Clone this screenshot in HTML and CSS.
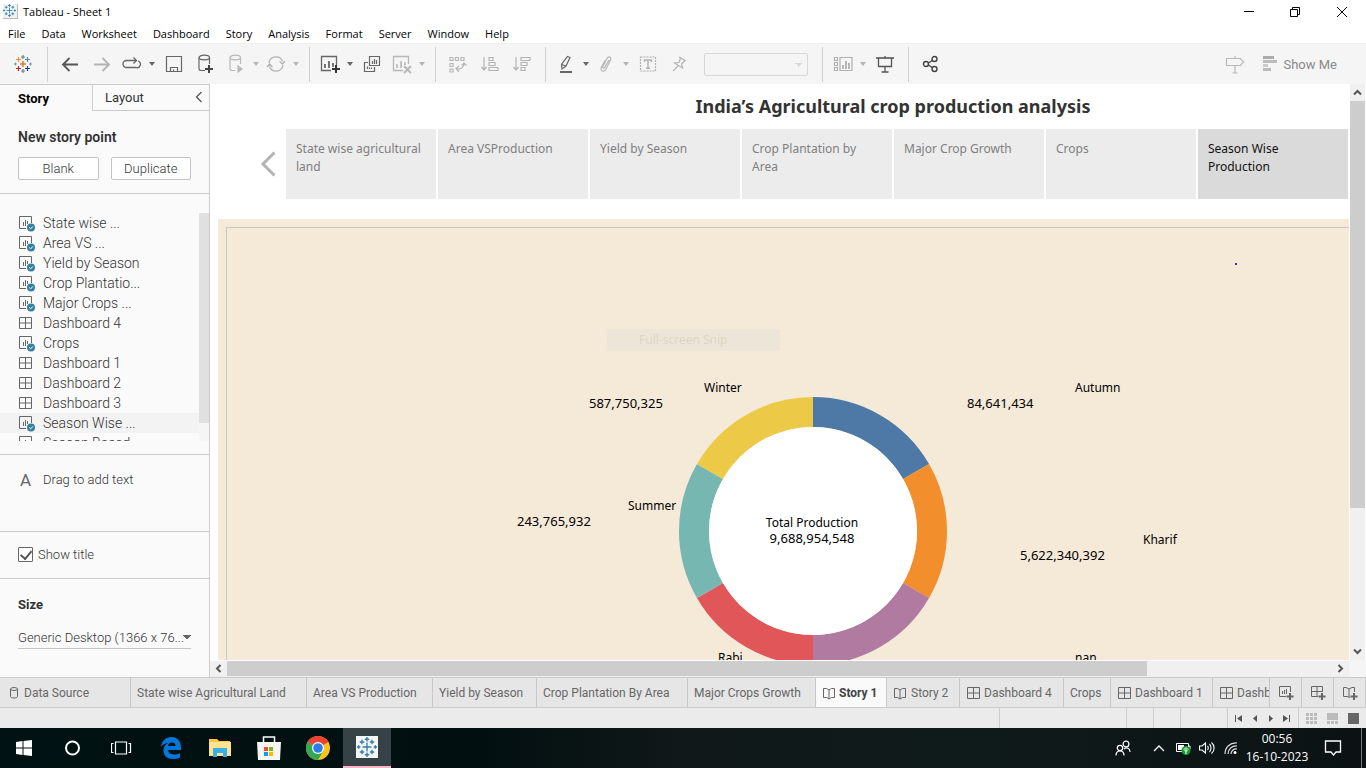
FILE: index.html
```html
<!DOCTYPE html>
<html lang="en">
<head>
<meta charset="utf-8">
<title>Tableau - Sheet 1</title>
<link rel="stylesheet" href="styles.css">
</head>
<body>
<svg class="defs" aria-hidden="true">
  <symbol id="tab-logo" viewBox="0 0 18 18">
    <g fill="none">
      <path stroke="#e8762d" stroke-width="1.5" d="M9 6v6M6 9h6"/>
      <path stroke="#5b879b" stroke-width="1.2" d="M9 0v4M7 2h4M9 14v4M7 16h4"/>
      <path stroke="#eb9129" stroke-width="1.2" d="M4.500 2v5M2 4.500h5"/>
      <path stroke="#59879b" stroke-width="1.2" d="M13.500 2v5M11 4.500h5"/>
      <path stroke="#c72035" stroke-width="1.2" d="M4.500 11v5M2 13.500h5"/>
      <path stroke="#1f447e" stroke-width="1.2" d="M13.500 11v5M11 13.500h5"/>
      <path stroke="#7099a6" d="M1.500 7.500v3M0 9h3M16.500 7.500v3M15 9h3"/>
    </g>
  </symbol>
  <symbol id="tab-blue" viewBox="0 0 18 18">
    <path fill="none" stroke="currentColor" stroke-width="1.200" d="M9 5v8M5 9h8M9 0v4M7 2h4M9 14v4M7 16h4M4.500 2.500v4M2.500 4.500h4M13.500 2.500v4M11.500 4.500h4M4.500 11.500v4M2.500 13.500h4M13.500 11.500v4M11.500 13.500h4M1.500 7.500v3M0 9h3M16.500 7.500v3M15 9h3"/>
  </symbol>
  <symbol id="sheet-ok" viewBox="0 0 18 17">
    <path fill="none" stroke="#666" d="M8 13.500H1.500V1.500h12V8"/>
    <path stroke="#666" d="M5.500 7v4M7.500 5v6M9.500 6v3"/>
    <circle cx="13" cy="12.500" r="4" fill="#36809f"/>
    <path fill="none" stroke="#fff" d="m11.200 12.500 1.400 1.400 2.300-2.500"/>
  </symbol>
  <symbol id="dash" viewBox="0 0 14 14">
    <path fill="none" stroke="#666" d="M1.500 1.500h12v11h-12zM7.500 1.500v11M1.500 7h12"/>
  </symbol>
  <symbol id="book" viewBox="0 0 14 14">
    <path fill="none" stroke="#666" d="M1.500 2.500h3L7 4l2.500-1.500h3v9h-3L7 13l-2.500-1.500h-3zM7 4v9"/>
  </symbol>
</svg>

<header>
  <div class="titlebar">
    <span class="app-icon"><svg width="13" height="13"><use href="#tab-blue"/></svg></span>
    <span class="app-title">Tableau - Sheet 1</span>
    <div class="win-controls">
      <button aria-label="Minimize"><svg width="12" height="12"><path stroke="#000" d="M1 5.500h10"/></svg></button>
      <button aria-label="Restore"><svg width="12" height="12"><path fill="none" stroke="#000" d="M1.500 3.500h7v7h-7zM3.500 3V1.500h7v7H9"/></svg></button>
      <button aria-label="Close"><svg width="12" height="12"><path stroke="#000" d="m1 1 10 10M11 1 1 11"/></svg></button>
    </div>
  </div>
  <nav class="menubar">
    <button>File</button><button>Data</button><button>Worksheet</button><button>Dashboard</button><button>Story</button><button>Analysis</button><button>Format</button><button>Server</button><button>Window</button><button>Help</button>
  </nav>
  <div class="toolbar">
    <div class="group">
      <button aria-label="Start page"><svg width="18" height="18"><use href="#tab-logo"/></svg></button>
    </div>
    <div class="group">
      <button aria-label="Undo"><svg width="18" height="18" fill="none" stroke="#555" stroke-width="1.800"><path d="M17 9.500H2M8.500 3 2 9.500 8.500 16"/></svg></button>
      <button aria-label="Redo" class="off"><svg width="18" height="18" fill="none" stroke="#b4b4b4" stroke-width="1.800"><path d="M1 9.500h15M9.500 3 16 9.500 9.500 16"/></svg></button>
      <button aria-label="Replay" class="split"><svg width="20" height="18" fill="none" stroke="#666" stroke-width="1.300"><path d="M6 12.500H4.500a3.500 3.500 0 0 1 0-7H14M11.500 2.500l3 3-3 3M14 12.500H6M16 6a3.300 3.300 0 0 1-2 6.500"/></svg></button>
      <button aria-label="Replay options" class="caret"></button>
      <button aria-label="Save"><svg width="18" height="18" fill="none" stroke="#666" stroke-width="1.200"><path d="M1.500 1.500h15v15h-15zM5.500 16.500v-4h7v4M8.500 16.500v-2"/></svg></button>
      <button aria-label="New data source"><svg width="20" height="20" fill="none" stroke="#666" stroke-width="1.200"><path d="M9 16.500H5c-1.500 0-2-1-2-2v-11M13.500 3.500V10"/><ellipse cx="8.300" cy="3.500" rx="5.200" ry="2.300"/><path stroke="#444" stroke-width="2" d="M13 11v8M9 15h8"/></svg></button>
      <button aria-label="Pause updates" class="split off"><svg width="20" height="20" fill="none" stroke="#b8b8b8" stroke-width="1.200"><path d="M9 16.500H6c-1.500 0-2-1-2-2v-11M14.500 3.500V10"/><ellipse cx="9.300" cy="3.500" rx="5.200" ry="2.300"/><path fill="#b8b8b8" d="m12 12 4 3-4 3z"/></svg></button>
      <button aria-label="Update options" class="caret off"></button>
      <button aria-label="Run update" class="split off"><svg width="20" height="18" fill="none" stroke="#b4b4b4" stroke-width="1.300"><path d="M3 8a7 7 0 0 1 13.500-1.500M17 10A7 7 0 0 1 3.500 11.500M13.500 6.500l3 2.500 2.500-3M1 12l2.500-3 3 3"/></svg></button>
      <button aria-label="Run options" class="caret off"></button>
    </div>
    <div class="group">
      <button aria-label="New worksheet" class="split"><svg width="20" height="20" fill="none" stroke="#666" stroke-width="1.300"><path d="M11 16.500H1.500v-14h15V12"/><path stroke-width="1.800" d="M5 10v4M9 7v7M13 9v4"/><path stroke="#333" stroke-width="2" d="M16 11v8M12 15h8"/></svg></button>
      <button aria-label="New sheet options" class="caret"></button>
      <button aria-label="Duplicate"><svg width="18" height="18" fill="none" stroke="#666" stroke-width="1.200"><path d="M6.500 1.500h10v9h-10zM5 7.500H1.500v9h10V12M9.500 6v3M11.500 4v5M13.500 5v4M4.500 11.500V14M6.500 12.500V14M8.500 12.500V14"/></svg></button>
      <button aria-label="Clear sheet" class="split off"><svg width="20" height="20" fill="none" stroke="#b8b8b8" stroke-width="1.300"><path d="M11 16.500H1.500v-14h15V10"/><path stroke-width="1.600" d="M5 10v4M9 7v7M13 8v3"/><path stroke-width="2" d="m12 12 7 7M19 12l-7 7"/></svg></button>
      <button aria-label="Clear options" class="caret off"></button>
    </div>
    <div class="group">
      <button aria-label="Swap rows and columns" class="off"><svg width="20" height="20" fill="none" stroke="#b8b8b8" stroke-width="1.200"><path d="M2 3.500h3v3H2zM7.500 3.500h3v3h-3zM13 3.500h3v3h-3zM2 9.500h3v3H2zM2 15h3v3H2zM8 14.500c5 1.500 8-1 8-5.500M11 12l-3 2.500 3 3.500M13.500 11.500 16 9l2.500 2.500"/></svg></button>
      <button aria-label="Sort ascending" class="off"><svg width="20" height="18" fill="none" stroke="#b4b4b4" stroke-width="1.200"><path d="M4 2v13M1.500 12 4 15l2.500-3M9 2.500h4v3H9zM9 7.500h6v3H9zM9 12.500h9v3H9z"/></svg></button>
      <button aria-label="Sort descending" class="off"><svg width="20" height="18" fill="none" stroke="#b4b4b4" stroke-width="1.200"><path d="M4 2v13M1.500 12 4 15l2.500-3M9 2.500h9v3H9zM9 7.500h6v3H9zM9 12.500h4v3H9z"/></svg></button>
    </div>
    <div class="group">
      <button aria-label="Highlight" class="split"><svg width="18" height="20" fill="none" stroke="#666" stroke-width="1.200"><path d="M10.500 2.500 13 3.500 9 12l-4 3-.500-4.500zM4.500 10.500 9 12"/><path stroke-width="2" d="M3 18h12"/></svg></button>
      <button aria-label="Highlight options" class="caret"></button>
      <button aria-label="Group members" class="split off"><svg width="18" height="20" fill="none" stroke="#b4b4b4" stroke-width="1.200"><path d="m12 6-4 7c-1 2-3 1-2-1l4-7.500c1.500-3 5-1.500 3.500 1.500L9 15c-2 4-6.500 2-4.500-2l4-7"/></svg></button>
      <button aria-label="Group options" class="caret off"></button>
      <button aria-label="Show mark labels" class="off"><svg width="18" height="18" fill="none" stroke="#b0b0b0" stroke-width="1.200"><path stroke-dasharray="2 1" d="M1.500 2h15v14h-15z"/><path stroke-width="1.400" d="M5.500 7V5h7v2M9 5v8M7 13.300h4"/></svg></button>
      <button aria-label="Fix axes" class="off"><svg width="18" height="18" fill="none" stroke="#b4b4b4" stroke-width="1.200"><path d="m8 2 7 4M9.500 3 8 7.500 3.500 8l8 5L10.500 9l3.500-3.500M7 11l-5 5"/></svg></button>
      <select class="fit" aria-label="Fit" disabled><option></option></select>
    </div>
    <div class="group">
      <button aria-label="Show cards" class="split off"><svg width="20" height="18" fill="none" stroke="#b0b0b0" stroke-width="1.200"><path d="M1.500 2.500h3v3h-3zM1.500 7.500h3v3h-3zM1.500 12.500h3v3h-3zM7 2.500h12v13H7z"/><path stroke-width="1.800" d="M10 10v4M13 6v8M16 8v6"/></svg></button>
      <button aria-label="Card options" class="caret off"></button>
      <button aria-label="Presentation mode"><svg width="18" height="18" fill="none" stroke="#555" stroke-width="1.300"><path stroke-width="1.600" d="M0 3h18"/><path d="M2.500 3v8.500h13V3M9 1v2M9 11.500V17M5.500 17h7"/></svg></button>
    </div>
    <div class="group last">
      <button aria-label="Share"><svg width="18" height="18" fill="none" stroke="#444" stroke-width="1.400"><circle cx="4" cy="9" r="2.500"/><circle cx="12.500" cy="4" r="2.500"/><circle cx="12.500" cy="14" r="2.500"/><path d="m6.300 8 4-2.500M6.300 10l4 2.500"/></svg></button>
    </div>
    <div class="show-me">
      <button aria-label="Guide"><svg width="20" height="20" fill="none" stroke="#b8b8b8" stroke-width="1.200"><path d="M1.500 4.500h14l3 3.500-3 3.500h-14zM10 2v2M10 11.500V19M7.500 19h5"/></svg></button>
      <button class="labelled"><svg width="14" height="16"><path fill="#aaa" d="M0 0h11v3H0z"/><path fill="#bbb" d="M0 4h14v3H0z"/><path fill="#ccc" d="M0 8h5v3H0z"/><path fill="#bbb" d="M0 12h8v3H0z"/></svg>Show Me</button>
    </div>
  </div>
</header>

<main>
  <aside>
    <div class="pane-tabs">
      <button class="pane-tab current">Story</button>
      <div class="pane-tab-rest"><button class="pane-tab">Layout</button><button class="collapse" aria-label="Collapse"><svg width="8" height="12" fill="none" stroke="#555" stroke-width="1.300"><path d="M6.500 0 1.500 5l5 5"/></svg></button></div>
    </div>
    <section class="new-point">
      <h2>New story point</h2>
      <div class="pair"><button>Blank</button><button>Duplicate</button></div>
    </section>
    <section class="sheets">
      <ul>
        <li><svg><use href="#sheet-ok"/></svg>State wise ...</li>
        <li><svg><use href="#sheet-ok"/></svg>Area VS ...</li>
        <li><svg><use href="#sheet-ok"/></svg>Yield by Season</li>
        <li><svg><use href="#sheet-ok"/></svg>Crop Plantatio...</li>
        <li><svg><use href="#sheet-ok"/></svg>Major Crops ...</li>
        <li class="board"><svg><use href="#dash"/></svg>Dashboard 4</li>
        <li><svg><use href="#sheet-ok"/></svg>Crops</li>
        <li class="board"><svg><use href="#dash"/></svg>Dashboard 1</li>
        <li class="board"><svg><use href="#dash"/></svg>Dashboard 2</li>
        <li class="board"><svg><use href="#dash"/></svg>Dashboard 3</li>
        <li class="hover"><svg><use href="#sheet-ok"/></svg>Season Wise ...</li>
        <li><svg><use href="#sheet-ok"/></svg>Season Based</li>
      </ul>
      <div class="list-track"><div class="list-thumb"></div></div>
    </section>
    <section class="drag"><span class="letter">A</span>Drag to add text</section>
    <section class="show-title"><label><input type="checkbox" checked>Show title</label></section>
    <section class="size">
      <label for="size">Size</label>
      <select id="size"><option>Generic Desktop (1366 x 76...</option></select>
    </section>
  </aside>

  <div class="workspace">
    <div class="viewport">
      <div class="story">
        <h1>India’s Agricultural crop production analysis</h1>
        <nav class="points">
          <button class="prev" aria-label="Previous"><svg width="16" height="26" fill="none" stroke="#b3b3b3" stroke-width="3"><path d="M14.500 1.500 3 13l11.500 11.500"/></svg></button>
          <button>State wise agricultural land</button><button>Area VSProduction</button><button>Yield by Season</button><button>Crop Plantation by Area</button><button>Major Crop Growth</button><button>Crops</button><button class="on">Season Wise Production</button>
        </nav>
        <div class="board-area">
          <div class="frame">
            <svg class="donut" width="270" height="270" viewBox="-135 -135 270 270">
              <g fill="none" stroke-width="30">
                <path stroke="#4e79a7" d="M0-119A119 119 0 0 1 103.060-59.500"/>
                <path stroke="#f28e2b" d="M103.060-59.500A119 119 0 0 1 103.060 59.500"/>
                <path stroke="#b07aa1" d="M103.060 59.500A119 119 0 0 1 0 119"/>
                <path stroke="#e15759" d="M0 119A119 119 0 0 1-103.060 59.500"/>
                <path stroke="#76b7b2" d="M-103.060 59.500A119 119 0 0 1-103.060-59.500"/>
                <path stroke="#edc948" d="M-103.060-59.500A119 119 0 0 1 0-119"/>
              </g>
              <circle r="104" fill="#fff"/>
            </svg>
            <div class="total">Total Production<b>9,688,954,548</b></div>
            <span class="name winter">Winter</span><b class="winter-n">587,750,325</b>
            <span class="name autumn">Autumn</span><b class="autumn-n">84,641,434</b>
            <span class="name summer">Summer</span><b class="summer-n">243,765,932</b>
            <span class="name kharif">Kharif</span><b class="kharif-n">5,622,340,392</b>
            <span class="name rabi">Rabi</span><span class="name nan">nan</span>
            <div class="snip">Full-screen Snip</div>
            <i class="dot"></i>
          </div>
        </div>
      </div>
    </div>
    <div class="vscroll">
      <button aria-label="Scroll up"><svg width="9" height="7" fill="none" stroke="#555" stroke-width="2"><path d="m1 5.500 3.500-3.500L8 5.500"/></svg></button>
      <div class="track"><div class="thumb"></div></div>
      <button aria-label="Scroll down"><svg width="9" height="7" fill="none" stroke="#555" stroke-width="2"><path d="m1 1.500 3.500 3.500L8 1.500"/></svg></button>
    </div>
    <div class="hscroll">
      <button aria-label="Scroll left"><svg width="7" height="9" fill="none" stroke="#555" stroke-width="2"><path d="M5.500 1 2 4.500 5.500 8"/></svg></button>
      <div class="track"><div class="thumb"></div></div>
      <button aria-label="Scroll right"><svg width="7" height="9" fill="none" stroke="#555" stroke-width="2"><path d="M1.500 1 5 4.500 1.500 8"/></svg></button>
    </div>
  </div>
</main>

<footer>
  <div class="tabs">
    <button class="source"><svg width="10" height="14" fill="none" stroke="#666"><ellipse cx="5" cy="3" rx="3.500" ry="1.500"/><path d="M1.500 3v7.500c0 2 7 2 7 0V3"/></svg>Data Source</button>
    <button>State wise Agricultural Land</button>
    <button>Area VS Production</button>
    <button>Yield by Season</button>
    <button>Crop Plantation By Area</button>
    <button>Major Crops Growth</button>
    <button class="active"><svg width="14" height="14"><use href="#book"/></svg>Story 1</button>
    <button><svg width="14" height="14"><use href="#book"/></svg>Story 2</button>
    <button><svg width="14" height="14"><use href="#dash"/></svg>Dashboard 4</button>
    <button>Crops</button>
    <button><svg width="14" height="14"><use href="#dash"/></svg>Dashboard 1</button>
    <button><svg width="14" height="14"><use href="#dash"/></svg>Dashb</button>
    <button class="new" aria-label="New worksheet"><svg width="16" height="16" fill="none" stroke="#666"><path d="M8 11.500H1.500v-10h11V7M4.500 6v3M6.500 5v4M8.500 4v5"/><path stroke-width="2" d="M12 8v7M8.500 11.500h7"/></svg></button>
    <button class="new" aria-label="New dashboard"><svg width="16" height="16" fill="none" stroke="#666"><path d="M8 11.500H1.500v-10h11V7M7 1.500v10M1.500 6.500h11"/><path stroke-width="2" d="M12 8v7M8.500 11.500h7"/></svg></button>
    <button class="new" aria-label="New story"><svg width="16" height="16" fill="none" stroke="#666"><path d="M8 12.500 5 11.500H1.500v-9H4L7 4l3-1.500h2.500V7M7 4v8"/><path stroke-width="2" d="M12 8v7M8.500 11.500h7"/></svg></button>
  </div>
  <div class="status">
    <span></span><span></span><span></span><span></span><span></span>
    <div class="pager">
      <button aria-label="First"><svg width="10" height="9" fill="#555"><path d="M1 1h1v7H1zM8 1v7L3 4.500z"/></svg></button>
      <button aria-label="Previous"><svg width="10" height="9" fill="#555"><path d="M7 1v7L3 4.500z"/></svg></button>
      <button aria-label="Next"><svg width="10" height="9" fill="#555"><path d="M3 1v7l4-3.500z"/></svg></button>
      <button aria-label="Last"><svg width="10" height="9" fill="#555"><path d="M7 1h1v7H7zM1 1v7l5-3.500z"/></svg></button>
    </div>
    <div class="views">
      <button aria-label="Sheet sorter"><svg width="11" height="11" fill="#bbb"><path d="M0 0h3v3H0zM4 0h3v3H4zM8 0h3v3H8zM0 4h3v3H0zM4 4h3v3H4zM8 4h3v3H8zM0 8h3v3H0zM4 8h3v3H4zM8 8h3v3H8z"/></svg></button>
      <button aria-label="Filmstrip"><svg width="11" height="11" fill="#bbb"><path d="M0 0h11v7H0zM0 8h3v3H0zM4 8h3v3H4zM8 8h3v3H8z"/></svg></button>
      <button aria-label="Tabs"><svg width="11" height="11" fill="#666"><path d="M0 0h11v11H0z"/></svg></button>
    </div>
  </div>
  <div class="taskbar">
    <div class="apps">
      <button aria-label="Start"><svg width="16" height="16" fill="#fff"><path d="m0 2 6.500-1v6.500H0zM7.500 1 16 0v7.500H7.500zM0 8.500h6.500V15L0 14zM7.500 8.500H16V16l-8.500-1z"/></svg></button>
      <button aria-label="Search"><svg width="16" height="16"><circle cx="7.500" cy="8" r="6.500" fill="none" stroke="#fff" stroke-width="2"/></svg></button>
      <button aria-label="Task view"><svg width="22" height="14" fill="none" stroke="#fff" stroke-width="1.200"><path d="M4.500 1h11v12h-11zM2.500 2.500h-2v9h2M17.500 2.500h2v9h-2"/></svg></button>
      <button aria-label="Edge"><svg width="22" height="22" fill="#0078d7"><path d="M1 10C1.500 4 6 0 11.500 0 17 0 21 4 21 10v3H8c.500 3 3 4.500 6.500 4.500 2 0 4-.500 5.500-1.500v4.500C18 21.500 15.500 22 13 22c-6 0-9.500-3.500-9.500-8.500 0-3.500 1.500-6 5-7.500C5.500 6 2.500 7.500 1 10zm7-1h7.500c0-2-1-3.500-3.500-3.500S8.500 7 8 9z"/></svg></button>
      <button aria-label="File Explorer"><svg width="22" height="20"><path fill="#ffc83d" d="M0 1h8l2 2h11v4H0z"/><path fill="#ffe290" d="M0 4h22v14H0z"/><path fill="#35b1e8" d="M4 10h14v9h-4v-4H8v4H4z"/></svg></button>
      <button aria-label="Store"><svg width="24" height="24"><path fill="none" stroke="#fff" stroke-width="1.500" d="M6.500 7V1h11v6"/><path fill="#f5f5f5" d="M0 6h24l-1 18H1z"/><path fill="#f25022" d="M7 11h4v4H7z"/><path fill="#7fba00" d="M12 11h4v4h-4z"/><path fill="#00a4ef" d="M7 16h4v4H7z"/><path fill="#ffb900" d="M12 16h4v4h-4z"/></svg></button>
      <button aria-label="Chrome"><svg width="24" height="24" viewBox="0 0 24 24"><circle cx="12" cy="12" r="12" fill="#fcc31e"/><path fill="#ea4335" d="M12 12 1.600 6A12 12 0 0 1 22.400 6z"/><path fill="#34a853" d="M1.600 6A12 12 0 0 0 12 24l5.200-9L12 12z"/><circle cx="12" cy="12" r="6" fill="#fff"/><circle cx="12" cy="12" r="4.800" fill="#2b7de9"/></svg></button>
      <button class="running" aria-label="Tableau"><span class="tile"><svg width="20" height="20"><use href="#tab-blue"/></svg></span></button>
    </div>
    <div class="tray">
      <button aria-label="People"><svg width="16" height="16" fill="none" stroke="#fff" stroke-width="1.200"><circle cx="5" cy="8" r="2.700"/><circle cx="11" cy="4" r="2.900"/><path d="M1 15.500c0-6 8-6 8 0M9 9c3-2.500 6-.500 6 3"/></svg></button>
      <button aria-label="Hidden icons"><svg width="12" height="8" fill="none" stroke="#fff" stroke-width="1.300"><path d="m1 7 5-5 5 5"/></svg></button>
      <button aria-label="Battery"><svg width="16" height="14"><path fill="none" stroke="#fff" d="M1.500 2.500h12v8h-12zM14 5h1v3"/><path fill="#fff" d="M3 4h6v5H3z"/><circle cx="11" cy="9.500" r="4.500" fill="#149b33"/><path stroke="#fff" fill="none" d="M11 13V8M9 8.500l2-2 2 2-2 2z"/></svg></button>
      <button aria-label="Volume"><svg width="16" height="14" fill="none" stroke="#fff" stroke-width="1.100"><path d="M.500 5h2.500l3.500-3v10L3 9H.500zM8.500 5c1 1 1 3 0 4M10.500 3c2 2 2 6 0 8M12.500 1.500c3.500 3 3.500 8 0 11"/></svg></button>
      <button aria-label="Network"><svg width="14" height="14" fill="none" stroke="#ddd" stroke-width="1.200"><path d="M1 13C1 6 6 1.500 13 2M4 13c0-5 4-8.500 9-8M7 13c0-3 2.500-5.500 6-5"/><circle cx="11" cy="11.500" r="1.500" fill="#fff" stroke="none"/></svg></button>
      <div class="clock"><span>00:56</span><span>16-10-2023</span></div>
      <button class="notes" aria-label="Notifications"><svg width="18" height="18" fill="none" stroke="#fff" stroke-width="1.300"><path d="M1.500 2h15v11H12l-2.500 3L7 13H1.500z"/></svg></button>
    </div>
  </div>
</footer>
</body>
</html>
```
FILE: styles.css
```css
* { box-sizing: border-box; }
body {
  margin: 0;
  height: 100vh;
  display: flex;
  flex-direction: column;
  overflow: hidden;
  background: #fff;
  font-family: Roboto, sans-serif;
  font-size: 13px;
  color: #4b4b4b;
}
button {
  border: 0;
  padding: 0;
  background: none;
  font: inherit;
  color: inherit;
  display: flex;
  align-items: center;
  justify-content: center;
  flex: none;
}
svg { display: block; flex: none; }
h1, h2, ul { margin: 0; padding: 0; }
.defs { position: absolute; width: 0; height: 0; }

/* title and menus */
.titlebar, .menubar { font-family: "Open Sans", sans-serif; font-size: 11px; color: #000; }
.titlebar { display: flex; align-items: center; height: 23px; padding-left: 3px; }
.app-icon { width: 15px; height: 15px; background: #f2f2f2; border-right: 1px solid #bbb; border-bottom: 1px solid #bbb; color: #2d7fa8; }
.app-title { margin-left: 5px; }
.win-controls { display: flex; margin-left: auto; height: 20px; }
.win-controls button { width: 46px; }
.win-controls button:last-child { width: 48px; }
.menubar { display: flex; gap: 16px; height: 20px; padding-left: 8px; }

/* toolbar */
.toolbar { display: flex; align-items: center; height: 41px; background: #f5f5f5; border-top: 1px solid #eee; }
.group { display: flex; align-items: center; height: 35px; padding: 0 7px 0 6px; border-right: 1px solid #d0d0d0; }
.group:first-child { padding: 0 8px 0 7px; }
.group.last { border: 0; }
.group button { width: 32px; height: 28px; }
.group .split { width: 28px; }
.group .caret { width: 12px; }
.caret::after { content: ""; border: 3px solid transparent; border-top: 4px solid #666; border-bottom: 0; }
.caret.off::after { border-top-color: #b4b4b4; }
.fit {
  appearance: none;
  width: 104px;
  height: 23px;
  margin: 0 7px 0 8px;
  border: 1px solid #ccc;
  border-radius: 2px;
  background:
    linear-gradient(45deg, transparent 50%, #ccc 50%) no-repeat 90px 9px / 4px 4px,
    linear-gradient(-45deg, transparent 50%, #ccc 50%) no-repeat 94px 9px / 4px 4px,
    #f5f5f5;
}
.show-me { display: flex; align-items: center; gap: 18px; margin-left: auto; padding-right: 29px; }
.labelled { gap: 6px; color: #8a8a8a; }

/* side pane */
main { flex: 1; min-height: 0; display: flex; }
aside { flex: none; width: 210px; display: flex; flex-direction: column; background: #fafafa; border-right: 1px solid #ccc; border-top: 1px solid #ccc; }
aside section { border-bottom: 1px solid #ccc; }
.pane-tabs { display: flex; height: 26px; }
.pane-tab { color: #333; }
.current { width: 92px; padding-left: 18px; justify-content: flex-start; color: #000; font-weight: 700; }
.pane-tab-rest { flex: 1; display: flex; justify-content: space-between; padding: 0 6px 0 12px; border-left: 1px solid #ccc; border-bottom: 1px solid #ccc; }
.new-point { height: 83px; padding: 17px 18px 0; }
h2, .size label { font-size: 13px; font-weight: 700; line-height: 18px; color: #333; }
.new-point h2 { font-size: 14px; font-weight: 600; }
.pair { display: grid; grid-template-columns: 1fr 1fr; gap: 12px; margin-top: 11px; }
.pair button { height: 23px; background: #fff; border: 1px solid #c4c4c4; border-radius: 2px; font-size: 13px; font-weight: 300; color: #333; }
.sheets { flex: 1; min-height: 0; display: flex; padding: 19px 0 13px; }
.sheets ul { flex: 1; overflow: hidden; list-style: none; }
.sheets li { display: flex; align-items: center; height: 20px; padding-left: 18px; gap: 7px; font-size: 14px; font-weight: 300; color: #333; }
.sheets li svg { width: 18px; height: 17px; }
.sheets li.board svg { width: 14px; height: 14px; margin-right: 4px; }
.sheets li.hover { background: #f3f3f3; }
.list-track { width: 10px; background: #f5f5f5; }
.list-thumb { height: 92%; background: #e0e0e0; }
.drag { height: 77px; display: flex; padding: 16px 0 0 20px; line-height: 18px; font-weight: 300; color: #333; }
.letter { width: 23px; font-size: 17px; font-weight: 400; color: #666; }
.show-title { height: 47px; padding: 15px 18px 0; font-weight: 300; color: #333; }
.show-title label { display: flex; align-items: center; gap: 5px; }
.show-title input { appearance: none; width: 15px; height: 15px; margin: 0; border: 1px solid #666; border-radius: 1px; background: #fff; display: grid; place-items: center; }
.show-title input::after { content: ""; width: 5px; height: 9px; border: solid #555; border-width: 0 2px 2px 0; transform: rotate(40deg) translateY(-1px); }
aside .size { height: 98px; padding: 17px 18px 0; border: 0; }
.size label { display: block; }
.size select { appearance: none; width: 100%; height: 23px; margin-top: 12px; border: 0; border-bottom: 1px solid #c4c4c4; padding: 0; font: 300 13px Roboto, sans-serif; color: #333; background: linear-gradient(45deg, transparent 50%, #666 50%) no-repeat 165px 9px / 4px 4px, linear-gradient(-45deg, transparent 50%, #666 50%) no-repeat 169px 9px / 4px 4px; }

/* workspace */
.workspace { flex: 1; min-width: 0; display: grid; grid-template: minmax(0, 1fr) 17px / minmax(0, 1fr) 17px; background: #f5f5f5; }
.viewport { overflow: hidden; background: #fff; }
.story { width: 1366px; }
h1 { padding-top: 10px; font: 700 18px/24px "Noto Sans", sans-serif; color: #333; text-align: center; }
.points { display: flex; gap: 2px; margin: 11px 0 20px; padding-left: 50px; font: 12px/18px "Noto Sans", sans-serif; color: #808080; }
.points button { width: 150px; height: 70px; padding: 11px 10px; align-items: flex-start; justify-content: flex-start; text-align: left; background: #ececec; }
.points .prev { width: 24px; padding: 0; align-items: center; background: none; }
.points .on { background: #dadada; color: #111; }
.board-area { margin-left: 8px; height: 768px; padding: 8px; background: #f5e9d8; }
.frame { position: relative; height: 100%; border: 1px solid #c8c8c8; font: 13px/16px "Noto Sans", sans-serif; color: #000; }
.frame b { font-weight: 400; }
.frame > * { position: absolute; white-space: nowrap; }
.frame .name, .frame .total { font-size: 12px; }
.donut { left: 451px; top: 168px; }
.total { left: 505px; top: 287px; width: 160px; text-align: center; }
.total b { display: block; font-size: 13px; line-height: 15px; }
.winter { left: 477px; top: 152px; }
.winter-n { left: 362px; top: 167px; }
.autumn { left: 848px; top: 152px; }
.autumn-n { left: 740px; top: 167px; }
.summer { left: 401px; top: 270px; }
.summer-n { left: 290px; top: 285px; }
.kharif { left: 916px; top: 304px; }
.kharif-n { left: 793px; top: 319px; }
.rabi { left: 491px; top: 422px; }
.nan { left: 848px; top: 422px; }
.snip { left: 380px; top: 101px; width: 173px; height: 22px; padding-left: 32px; background: #ede6d8; color: #ded5c3; font-size: 12px; line-height: 22px; }
.dot { left: 1008px; top: 35px; width: 2px; height: 2px; background: #33a; }

.vscroll { display: flex; flex-direction: column; padding: 0 1px; background: #fff; }
.vscroll button { height: 17px; background: #f0f0f0; }
.track { flex: 1; background: #f0f0f0; }
.vscroll .thumb { height: 75%; background: #cdcdcd; }
.hscroll { display: flex; border-top: 1px solid #fff; border-bottom: 1px solid #eee; }
.hscroll button { width: 17px; background: #f0f0f0; }
.hscroll .thumb { width: 83.3%; height: 100%; background: #cdcdcd; }

/* sheet tabs */
.tabs { display: grid; grid-template-columns: 131px 176px 126px 104px 151px 128px 71px 73px 104px 47px 102px 1fr 32px 32px 32px; height: 31px; background: #e6e6e6; border-top: 1px solid #ccc; border-bottom: 1px solid #ccc; font-size: 12px; color: #666; }
.tabs button { justify-content: flex-start; gap: 4px; min-width: 0; padding-left: 6px; border-right: 1px solid #c8c8c8; overflow: hidden; white-space: nowrap; }
.tabs .source { padding-left: 9px; gap: 5px; }
.tabs .active { background: #fafafa; color: #444; font-weight: 700; gap: 3px; }
.tabs .new { padding: 0; justify-content: center; }
.status { display: grid; grid-template-columns: minmax(0, 1fr) 127px 27px 27px 47px 71px 67px; height: 20px; background: #ebebeb; }
.status > * { border-right: 1px solid #ccc; }
.pager { display: flex; align-items: center; justify-content: center; gap: 6px; }
.views { display: flex; align-items: center; justify-content: center; gap: 10px; border: 0; }

/* taskbar */
.taskbar { display: flex; justify-content: space-between; height: 40px; color: #fff; background: linear-gradient(90deg, #001213, #020f10 35%, #101819 50%, #0f1b1a 70%, #0c1214); }
.apps { display: flex; gap: 1px; }
.apps button { width: 48px; }
.apps .running { background: #374246; border-bottom: 2px solid #ffb3c7; }
.tile { padding: 1px; background: #f5f5f5; color: #2d7fa8; }
.tray { display: flex; margin-right: 4px; padding-right: 6px; border-right: 1px solid #777; }
.tray button { width: 24px; }
.tray button:first-child { width: 48px; }
.clock { display: flex; flex-direction: column; justify-content: center; align-items: center; width: 68px; font: 12px/18px "Open Sans", sans-serif; }
.tray .notes { width: 44px; }
```
